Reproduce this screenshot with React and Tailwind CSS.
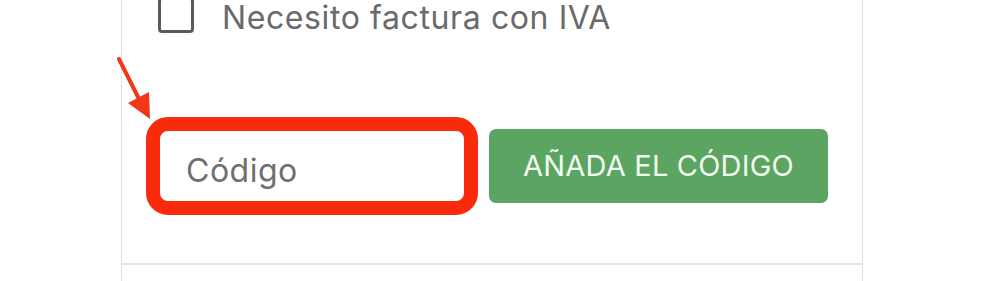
import React from "react";

export default function App() {
  return (
    <div className="relative h-[281px] w-[1000px] overflow-hidden bg-white font-['Inter','Liberation_Sans',sans-serif]">
      <div className="ml-[121px] flex h-full w-[742px] flex-col border-x border-[#dedede]">
        <label className="-mt-[3px] flex h-[36px] items-center gap-[28px] pl-[36px]">
          <span className="h-[36px] w-[36px] shrink-0 rounded-[4px] border-[3px] border-[#5a5a5a] bg-white" />
          <span className="translate-y-[3px] text-[32px] leading-[36px] tracking-[0.6px] text-[#6a6a6a]">
            Necesito factura con IVA
          </span>
        </label>

        <div className="mt-[84px] flex items-center gap-[11px] pl-[24px]">
          <div className="h-[98px] w-[332px] rounded-[22px] border-[14px] border-[#f92b0d] bg-white">
            <input
              type="text"
              placeholder="Código"
              className="h-full w-full rounded-[9px] bg-transparent pl-[26px] pt-[8px] text-[32px] tracking-[0.5px] text-[#555] outline-none placeholder:text-[#6f6f6f]"
            />
          </div>
          <button className="h-[74px] w-[339px] rounded-[7px] bg-[#5ca462] text-[29px] tracking-[0.2px] text-[#f2fbef]">
            AÑADA EL CÓDIGO
          </button>
        </div>

        <div className="mt-auto h-[18px] border-t-2 border-[#e4e4e4]" />
      </div>

      <svg
        className="pointer-events-none absolute left-0 top-0"
        width="1000"
        height="281"
        viewBox="0 0 1000 281"
      >
        <line x1="119" y1="59" x2="139" y2="99" stroke="#f2361a" strokeWidth="4" strokeLinecap="round" />
        <polygon points="128,103 149,92 150,119" fill="#f2361a" />
      </svg>
    </div>
  );
}
